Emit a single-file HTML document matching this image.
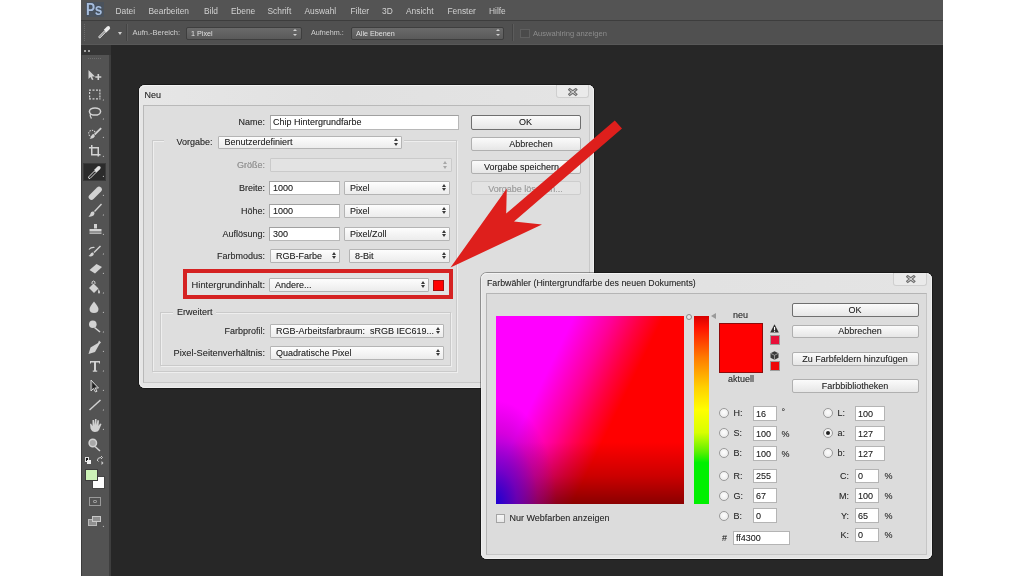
<!DOCTYPE html>
<html><head><meta charset="utf-8">
<style>
*{box-sizing:border-box}
html,body{margin:0;padding:0}
body{width:1024px;height:576px;position:relative;overflow:hidden;background:#fff;font-family:"Liberation Sans",sans-serif}
.a{position:absolute}
.t{position:absolute;white-space:nowrap;line-height:1;text-shadow:0 0 0.5px rgba(0,0,0,0.35)}
.menu{color:#d2d2d2;font-size:8.4px;top:6.6px;text-shadow:none}
.lbl{color:#2f2f2f;font-size:9px}
.fld{position:absolute;background:#fff;border:1px solid #b8b8b8;border-top-color:#a0a0a0;border-left-color:#a8a8a8}
.dd{position:absolute;background:linear-gradient(#fdfdfd,#ececec);border:1px solid #b4b4b4;border-radius:1px}
.btn{position:absolute;background:linear-gradient(#fbfbfb,#e6e6e6);border:1px solid #b0b0b0;border-radius:2px}
.ftxt{position:absolute;color:#2a2a2a;font-size:9px;line-height:1;white-space:nowrap}
.arr{position:absolute;width:4px;height:8px}
.arr:before{content:"";position:absolute;left:0;top:0;border-left:2px solid transparent;border-right:2px solid transparent;border-bottom:3px solid #3a3a3a}
.arr:after{content:"";position:absolute;left:0;top:4.5px;border-left:2px solid transparent;border-right:2px solid transparent;border-top:3px solid #3a3a3a}
.radio{position:absolute;width:10px;height:10px;border-radius:50%;border:1px solid #9a9a9a;background:radial-gradient(circle at 50% 40%,#fdfdfd,#e6e6e6)}
</style></head><body><div style="position:absolute;left:0;top:0;width:1024px;height:576px;will-change:transform">
<!-- PS window -->
<div class="a" style="left:81px;top:0;width:862px;height:576px;background:#272727"></div>
<!-- menubar -->
<div class="a" style="left:81px;top:0;width:862px;height:20px;background:#545454"></div>
<div class="a" style="left:81px;top:20px;width:862px;height:1px;background:#3d3d3d"></div>
<!-- options bar -->
<div class="a" style="left:81px;top:21px;width:862px;height:24px;background:#505050"></div>
<div class="a" style="left:81px;top:44px;width:862px;height:1px;background:#585858"></div>
<!-- toolbar -->
<div class="a" style="left:81px;top:45px;width:30px;height:531px;background:#535353"></div>
<div class="a" style="left:81px;top:45px;width:1px;height:531px;background:#3c3c3c"></div>
<div class="a" style="left:108.5px;top:45px;width:2.5px;height:531px;background:#3e3e3e"></div>
<div class="a" style="left:81px;top:45px;width:30px;height:10px;background:#353535"></div>
<div class="a" style="left:84px;top:49.5px;width:2px;height:2px;background:#a4a4a4"></div>
<div class="a" style="left:87.5px;top:49.5px;width:2px;height:2px;background:#a4a4a4"></div>
<div class="a" style="left:88px;top:58px;width:13px;height:1px;border-top:1px dotted #6e6e6e"></div>
<svg class="a" style="left:81px;top:44px" width="30" height="532" viewBox="81 44 30 532">
<g fill="#d2d2d2" stroke="none">
 <!-- move -->
 <path d="M88.5 70 L88.5 79 L90.5 77 L92 80 L93.5 79.5 L92 76.5 L95 76.5 Z"/>
 <path d="M97.5 74 h1.6 v2.2 h2.2 v1.6 h-2.2 v2.2 h-1.6 v-2.2 h-2.2 v-1.6 h2.2 Z"/>
 <!-- marquee dashed -->
 <path d="M89 89.5 h2 v1.2 h-2 Z M92.5 89.5 h2 v1.2 h-2 Z M96 89.5 h2 v1.2 h-2 Z M99 89.5 h1.5 v2 h-1.2 Z M89 92 h1.2 v2 h-1.2 Z M99.3 92.5 h1.2 v2 h-1.2 Z M89 95.5 h1.2 v2 h-1.2 Z M99.3 95.5 h1.2 v2 h-1.2 Z M89 98.3 h2 v1.2 h-2 Z M92.5 98.3 h2 v1.2 h-2 Z M96 98.3 h2 v1.2 h-2 Z M99.3 98.3 h1.2 v1.2 h-1.2 Z"/>
 <!-- lasso -->
 <ellipse cx="95" cy="111.5" rx="5.6" ry="3.6" fill="none" stroke="#d2d2d2" stroke-width="1.5"/>
 <path d="M90.5 113.5 Q89.5 116 91.5 118.5" fill="none" stroke="#d2d2d2" stroke-width="1.3"/>
 <!-- quick selection -->
 <circle cx="92" cy="133.5" r="3.3" fill="none" stroke="#d2d2d2" stroke-width="1.1" stroke-dasharray="1.4 1.1"/>
 <path d="M100.5 127.5 L101.8 128.8 L95.5 135 L94.2 133.7 Z"/>
 <path d="M94 134 Q95.5 135.5 94 137.5 Q92.5 139 89.5 138.5 Q91 137.5 91.3 136 Q91.8 134 94 134 Z"/>
 <!-- crop -->
 <path d="M91 145 h1.5 v9 h8 v1.5 h-9.5 Z M89 147 h10 v9.5 h-1.5 v-8 h-8.5 Z"/>
 <!-- eyedropper active bg handled separately -->
 <!-- healing -->
 <path d="M89.5 195 L97 187.5 Q99 185.5 101 187.5 Q103 189.5 101 191.5 L93.5 199 Q91.5 201 89.5 199 Q87.5 197 89.5 195 Z"/>
 <!-- brush -->
 <path d="M101 203.5 L102 204.5 L95 212 L94 211 Z"/>
 <path d="M93.5 211.5 Q95.5 213 93.5 215.5 Q91.5 217 88.5 216.5 Q90.5 215 90.5 213.5 Q91 211 93.5 211.5 Z"/>
 <!-- stamp -->
 <path d="M94 224 h3 v4.5 h-3 Z M89.5 229 h12 v2.5 h-12 Z M89.5 232.5 h12 v1.2 h-12 Z"/>
 <!-- history brush -->
 <path d="M100 245.5 L101 246.5 L94.5 253 L93.5 252 Z"/>
 <path d="M93 252.5 Q94.5 254 93 255.5 Q91 257 88.5 256 Q90 255 90.5 254 Q91 252 93 252.5 Z"/>
 <path d="M89 249.5 Q91 247 94.5 247.5" fill="none" stroke="#d2d2d2" stroke-width="1.1"/>
 <!-- eraser -->
 <path d="M89.5 270 L96.5 264 L102 267 L95 273.5 Z"/>
 <!-- bucket -->
 <path d="M89 288 L93.5 283.5 L98.5 288.5 L94 293 Z"/>
 <path d="M92 284 Q91.5 281 93.5 281 Q95.5 281 95 284" fill="none" stroke="#d2d2d2" stroke-width="1"/>
 <path d="M98.5 289 Q100 291 100 292 Q100 293.5 99 293.5 Q98 293.5 98 292 Z"/>
 <!-- blur drop -->
 <path d="M94 301.5 Q98.5 307 98.5 309 Q98.5 313 94 313 Q89.5 313 89.5 309 Q89.5 307 94 301.5 Z"/>
 <!-- dodge -->
 <circle cx="92.8" cy="324.3" r="3.8"/>
 <path d="M95 327 L100.5 331.5 L99.5 332.5 L94 328 Z"/>
 <!-- pen -->
 <path d="M99 340.5 L101 342.5 L99.5 344 L95 352 L88.5 354 L90.5 347.5 L98 343 Z"/>
 <!-- type -->
 <path d="M90 361 h10 v2.5 h-1 v-1 h-3 v8 h1.2 v1.2 h-4.4 v-1.2 h1.2 v-8 h-3 v1 h-1 Z"/>
 <!-- path selection -->
 <path d="M91 380 L91 391 L93.5 388.5 L95.5 392 L97 391.3 L95.3 388 L98.5 388 Z" fill="none" stroke="#d2d2d2" stroke-width="1"/>
 <path d="M92.5 383 L92.5 388.5 L96 386.5 Z" fill="#1e1e1e"/>
 <!-- line -->
 <path d="M89 409.5 L100 399.5 L101 400.5 L90 410.5 Z"/>
 <!-- hand -->
 <path d="M90 424 L91 423.5 L92.5 426 L92.5 420 L94 420 L94.5 425 L95 419 L96.5 419 L96.5 425 L97.5 420 L99 420.5 L98.5 426 L100 423.5 L101.5 424 L99 430 Q98 432 95 432 Q92 432 90.5 428.5 Z"/>
 <!-- zoom -->
 <circle cx="92.8" cy="443" r="3.7" fill="#a8a8a8" stroke="#d2d2d2" stroke-width="1.5"/>
 <path d="M95.5 446 L100.5 450.5 L99.5 451.5 L94.5 447 Z"/>
 <!-- small triangles -->
 <path d="M102.5 100.5 l1.5 -1.5 v1.5 Z M102.5 119.5 l1.5 -1.5 v1.5 Z M102.5 138 l1.5 -1.5 v1.5 Z M102.5 157 l1.5 -1.5 v1.5 Z M102.5 176.5 l1.5 -1.5 v1.5 Z M102.5 196 l1.5 -1.5 v1.5 Z M102.5 215.5 l1.5 -1.5 v1.5 Z M102.5 235 l1.5 -1.5 v1.5 Z M102.5 254.5 l1.5 -1.5 v1.5 Z M102.5 274 l1.5 -1.5 v1.5 Z M102.5 293.5 l1.5 -1.5 v1.5 Z M102.5 313 l1.5 -1.5 v1.5 Z M102.5 332.5 l1.5 -1.5 v1.5 Z M102.5 352 l1.5 -1.5 v1.5 Z M102.5 371.5 l1.5 -1.5 v1.5 Z M102.5 391 l1.5 -1.5 v1.5 Z M102.5 410.5 l1.5 -1.5 v1.5 Z M102.5 430 l1.5 -1.5 v1.5 Z M102.5 527 l1.5 -1.5 v1.5 Z" fill="#bdbdbd"/>
</g>
</svg>
<!-- active eyedropper -->
<div class="a" style="left:83px;top:162.5px;width:23px;height:18px;background:#2b2b2b;border:1px solid #3a3a3a"></div>
<svg class="a" style="left:83px;top:162.5px" width="23" height="18" viewBox="0 0 23 18"><path d="M6 15.5 L5.5 14 L11.5 8 L13 9.5 L7 15.5 Z" fill="none" stroke="#d8d8d8" stroke-width="1"/><path d="M11 7 L14.5 3.5 Q16 2.3 17.2 3.5 Q18.4 4.7 17 6.2 L13.5 9.5 Z" fill="#e2e2e2"/><path d="M19.5 14 l1.5 -1.5 v1.5 Z" fill="#bdbdbd"/></svg>
<!-- colors -->
<div class="a" style="left:84.5px;top:457px;width:4.5px;height:4.5px;background:#111;border:0.5px solid #ddd"></div>
<div class="a" style="left:86.5px;top:459.5px;width:4.5px;height:4.5px;background:#eee"></div>
<svg class="a" style="left:96px;top:456px" width="9" height="9" viewBox="0 0 9 9"><path d="M1.5 4 Q1.5 1.5 5 1.5 M5 0 L6.5 1.5 L5 3 M1 4 L2.5 5.5" fill="none" stroke="#d0d0d0" stroke-width="1"/><path d="M5.5 5 L7.5 7 L5.5 9 Z M4 5.5" fill="#d0d0d0"/></svg>
<div class="a" style="left:91.5px;top:476px;width:13.5px;height:13px;background:#fdfdfd;border:1px solid #444"></div>
<div class="a" style="left:84.5px;top:468.5px;width:13.5px;height:12.5px;background:#ccf2b7;border:1px solid #3c3c3c"></div>
<div class="a" style="left:88.5px;top:496.5px;width:12.5px;height:9.5px;border:1px solid #9a9a9a"></div>
<div class="a" style="left:92.5px;top:499.5px;width:4.5px;height:3.5px;border:1px solid #9a9a9a;border-radius:1px"></div>
<div class="a" style="left:88px;top:519px;width:9px;height:6.5px;background:#8f8f8f;border:1px solid #b9b9b9"></div>
<div class="a" style="left:92px;top:515.5px;width:9px;height:6.5px;background:#8f8f8f;border:1px solid #c8c8c8"></div>
<!-- Ps logo -->
<div class="a" style="left:85.5px;top:2px;width:18px;height:14.5px;background:#4a525c"></div><div class="t" style="left:86px;top:2px;font-size:16px;font-weight:bold;color:#a8bddb;letter-spacing:-0.5px;transform:scaleX(0.85);transform-origin:0 0;text-shadow:0 0 1px #2d4a70">Ps</div>
<div class="t menu" style="left:115.5px">Datei</div>
<div class="t menu" style="left:148.5px">Bearbeiten</div>
<div class="t menu" style="left:204px">Bild</div>
<div class="t menu" style="left:231px">Ebene</div>
<div class="t menu" style="left:267.5px">Schrift</div>
<div class="t menu" style="left:304.5px">Auswahl</div>
<div class="t menu" style="left:350.5px">Filter</div>
<div class="t menu" style="left:382px">3D</div>
<div class="t menu" style="left:406px">Ansicht</div>
<div class="t menu" style="left:447.5px">Fenster</div>
<div class="t menu" style="left:489px">Hilfe</div>
<!-- options bar contents -->
<div class="a" style="left:84px;top:24px;width:1px;height:17px;border-left:1px dotted #6a6a6a"></div>
<svg class="a" style="left:96px;top:24px" width="16" height="16" viewBox="0 0 16 16"><path d="M3 13.8 L2.8 12.6 L8.5 6.8 L9.8 8.1 L4.1 13.9 Z" fill="#9a9a9a" stroke="#d8d8d8" stroke-width="0.9"/><path d="M7.8 5.8 L10.8 2.8 Q12.5 1.5 13.7 2.7 Q14.8 4 13.4 5.6 L10.3 8.4 Z" fill="#ececec"/></svg>
<div class="a" style="left:118px;top:32px;border-left:2.5px solid transparent;border-right:2.5px solid transparent;border-top:3px solid #cfcfcf"></div>
<div class="a" style="left:126px;top:24px;width:1px;height:17px;background:#444"></div>
<div class="a" style="left:127px;top:24px;width:1px;height:17px;background:#5c5c5c"></div>
<div class="t" style="left:132.5px;top:29px;font-size:7.5px;color:#d0d0d0;text-shadow:none">Aufn.-Bereich:</div>
<div class="a" style="left:185.5px;top:26.5px;width:116px;height:13px;background:linear-gradient(#6a6a6a,#5a5a5a);border:1px solid #3e3e3e;border-radius:2px"></div>
<div class="t" style="left:191px;top:29.5px;font-size:7.2px;color:#e0e0e0;text-shadow:none">1 Pixel</div>
<div class="a" style="left:293px;top:29px;border-left:2px solid transparent;border-right:2px solid transparent;border-bottom:2.5px solid #d0d0d0"></div>
<div class="a" style="left:293px;top:34px;border-left:2px solid transparent;border-right:2px solid transparent;border-top:2.5px solid #d0d0d0"></div>
<div class="t" style="left:311px;top:29px;font-size:7.2px;color:#d0d0d0;text-shadow:none">Aufnehm.:</div>
<div class="a" style="left:350.5px;top:26.5px;width:153px;height:13px;background:linear-gradient(#6a6a6a,#5a5a5a);border:1px solid #3e3e3e;border-radius:2px"></div>
<div class="t" style="left:356px;top:29.5px;font-size:7.2px;color:#e0e0e0;text-shadow:none">Alle Ebenen</div>
<div class="a" style="left:496px;top:29px;border-left:2px solid transparent;border-right:2px solid transparent;border-bottom:2.5px solid #d0d0d0"></div>
<div class="a" style="left:496px;top:34px;border-left:2px solid transparent;border-right:2px solid transparent;border-top:2.5px solid #d0d0d0"></div>
<div class="a" style="left:512px;top:24px;width:1px;height:17px;background:#444"></div>
<div class="a" style="left:513px;top:24px;width:1px;height:17px;background:#5c5c5c"></div>
<div class="a" style="left:520px;top:28.5px;width:9.5px;height:9.5px;background:#4a4a4a;border:1px solid #5f5f5f"></div>
<div class="t" style="left:533px;top:29.5px;font-size:7.55px;color:#8c8c8c;text-shadow:none">Auswahlring anzeigen</div>

<!-- ===== NEU dialog ===== -->
<div class="a" style="left:138px;top:84px;width:457px;height:305px;border-radius:7px;background:rgba(0,0,0,0.35)"></div>
<div class="a" style="left:139px;top:85px;width:455px;height:303px;border-radius:6px;background:linear-gradient(90deg,#e6e6e6,#e1e1e1 45%,#e4e4e4);box-shadow:inset 0 1px 0 #f3f3f3,inset 1px 0 0 #efefef,inset -1px 0 0 #efefef,inset 0 -1px 0 #efefef"></div>
<div class="t" style="left:144.5px;top:91px;font-size:9px;color:#2e2e2e">Neu</div>
<div class="a" style="left:555.5px;top:85px;width:33px;height:13px;border:1px solid #cfcfcf;border-top:none;border-radius:0 0 3px 3px;background:#eaeaea"></div>
<svg class="a" style="left:567.5px;top:87.5px" width="10" height="9" viewBox="0 0 10 9"><path d="M0.5 1.7 L1.7 0.5 L4.75 2.8 L7.8 0.5 L9 1.7 L6.2 4 L9 6.3 L7.8 7.5 L4.75 5.2 L1.7 7.5 L0.5 6.3 L3.3 4 Z" fill="#f0f0f0" stroke="#6e6e6e" stroke-width="1.1"/></svg>
<div class="a" style="left:143px;top:105px;width:447px;height:278px;background:#dedede;border:1px solid #b9b9b9;border-right-color:#c8c8c8;border-bottom-color:#c8c8c8"></div>
<!-- outer group box (Vorgabe) -->
<div class="a" style="left:151.5px;top:140px;width:305px;height:232px;border:1px solid #cacaca;box-shadow:inset 1px 1px 0 #eeeeee,1px 1px 0 #eeeeee"></div>
<div class="a" style="left:164px;top:133px;width:240px;height:14px;background:#dedede"></div>
<!-- Erweitert group box -->
<div class="a" style="left:160px;top:311.5px;width:291px;height:54px;border:1px solid #cacaca;box-shadow:inset 1px 1px 0 #eeeeee,1px 1px 0 #eeeeee"></div>
<div class="a" style="left:173px;top:305px;width:43px;height:12px;background:#dedede"></div>

<div class="t lbl" style="right:759px;top:118px">Name:</div>
<div class="fld" style="left:269.5px;top:114.5px;width:189px;height:15px"></div>
<div class="t ftxt" style="left:273px;top:118px">Chip Hintergrundfarbe</div>

<div class="t lbl" style="left:176.5px;top:138px">Vorgabe:</div>
<div class="dd" style="left:217.5px;top:135.5px;width:184px;height:13px"></div>
<div class="t ftxt" style="left:224.5px;top:138px">Benutzerdefiniert</div>
<div class="arr" style="left:394px;top:138px"></div>

<div class="t lbl" style="right:759px;top:161px;color:#9a9a9a">Größe:</div>
<div class="dd" style="left:269.5px;top:158px;width:182px;height:14px;background:#e3e3e3;border-color:#cacaca"></div>
<div class="arr" style="left:443px;top:161px;opacity:.35"></div>

<div class="t lbl" style="right:759px;top:184px">Breite:</div>
<div class="fld" style="left:269px;top:180.5px;width:71px;height:14.5px"></div>
<div class="t ftxt" style="left:273px;top:184px">1000</div>
<div class="dd" style="left:344px;top:180.5px;width:106px;height:14.5px"></div>
<div class="t ftxt" style="left:350px;top:184px">Pixel</div>
<div class="arr" style="left:442px;top:183.5px"></div>

<div class="t lbl" style="right:759px;top:206.5px">Höhe:</div>
<div class="fld" style="left:269px;top:203.5px;width:71px;height:14.5px"></div>
<div class="t ftxt" style="left:273px;top:207px">1000</div>
<div class="dd" style="left:344px;top:203.5px;width:106px;height:14.5px"></div>
<div class="t ftxt" style="left:350px;top:207px">Pixel</div>
<div class="arr" style="left:442px;top:206.5px"></div>

<div class="t lbl" style="right:759px;top:229.5px">Auflösung:</div>
<div class="fld" style="left:269px;top:226.5px;width:71px;height:14.5px"></div>
<div class="t ftxt" style="left:273px;top:230px">300</div>
<div class="dd" style="left:344px;top:226.5px;width:106px;height:14.5px"></div>
<div class="t ftxt" style="left:350px;top:230px">Pixel/Zoll</div>
<div class="arr" style="left:442px;top:229.5px"></div>

<div class="t lbl" style="right:759px;top:252px">Farbmodus:</div>
<div class="dd" style="left:269.5px;top:248.5px;width:70.5px;height:14.5px"></div>
<div class="t ftxt" style="left:276px;top:252px">RGB-Farbe</div>
<div class="arr" style="left:332px;top:251.5px"></div>
<div class="dd" style="left:348.5px;top:248.5px;width:101.5px;height:14.5px"></div>
<div class="t ftxt" style="left:355px;top:252px">8-Bit</div>
<div class="arr" style="left:442px;top:251.5px"></div>

<!-- red highlight box -->
<div class="a" style="left:182.5px;top:269px;width:270.5px;height:30px;border:4.8px solid #d52222;background:#e2e2e2"></div>
<div class="t lbl" style="right:759px;top:281px;font-size:9.3px">Hintergrundinhalt:</div>
<div class="dd" style="left:268.5px;top:278px;width:160px;height:13.5px"></div>
<div class="t ftxt" style="left:275px;top:281px">Andere...</div>
<div class="arr" style="left:421px;top:280.5px"></div>
<div class="a" style="left:432.5px;top:279.5px;width:11.5px;height:11px;background:#ff0000;border:1px solid #a01010"></div>

<div class="t lbl" style="left:177px;top:308px">Erweitert</div>
<div class="t lbl" style="right:759px;top:327px">Farbprofil:</div>
<div class="dd" style="left:270px;top:323.5px;width:174px;height:14px"></div>
<div class="t ftxt" style="left:276px;top:327px">RGB-Arbeitsfarbraum:&nbsp; sRGB IEC619...</div>
<div class="arr" style="left:436px;top:326.5px"></div>
<div class="t lbl" style="right:759px;top:349px;font-size:9.25px">Pixel-Seitenverhältnis:</div>
<div class="dd" style="left:270px;top:345.5px;width:174px;height:14px"></div>
<div class="t ftxt" style="left:276px;top:349px">Quadratische Pixel</div>
<div class="arr" style="left:436px;top:348.5px"></div>

<!-- buttons -->
<div class="btn" style="left:470.5px;top:114.5px;width:110px;height:15px;border-color:#6f6f6f"></div>
<div class="t ftxt" style="left:470.5px;width:110px;text-align:center;top:118px">OK</div>
<div class="btn" style="left:470.5px;top:137px;width:110px;height:14px"></div>
<div class="t ftxt" style="left:476px;width:110px;text-align:center;top:140px">Abbrechen</div>
<div class="btn" style="left:470.5px;top:159.5px;width:110px;height:14px"></div>
<div class="t ftxt" style="left:466.5px;width:110px;text-align:center;top:162.5px">Vorgabe speichern</div>
<div class="btn" style="left:470.5px;top:181px;width:110px;height:14px;background:#e3e3e3;border-color:#cdcdcd"></div>
<div class="t ftxt" style="left:470.5px;width:110px;text-align:center;top:184.5px;color:#a8a8a8">Vorgabe löschen...</div>


<!-- ===== red arrow ===== -->
<svg class="a" style="left:0;top:0" width="1024" height="576" viewBox="0 0 1024 576">
<path d="M450.5 267.5 L506.8 188.5 L506.2 213.5 L614.8 120.4 L622 128.5 L514 221.5 L542 224.5 Z" fill="#de1f1c"/>
</svg>
<!-- ===== Farbwaehler dialog ===== -->
<div class="a" style="left:480px;top:271.5px;width:453px;height:288.5px;border-radius:7px;background:rgba(0,0,0,0.35)"></div>
<div class="a" style="left:481px;top:272.5px;width:451px;height:286.5px;border-radius:6px;background:linear-gradient(90deg,#e6e6e6,#e2e2e2 50%,#e4e4e4);box-shadow:inset 0 1px 0 #f3f3f3,inset 1px 0 0 #efefef,inset -1px 0 0 #efefef,inset 0 -1px 0 #efefef"></div>
<div class="t" style="left:487px;top:278.5px;font-size:8.8px;color:#2e2e2e">Farbwähler (Hintergrundfarbe des neuen Dokuments)</div>
<div class="a" style="left:892.5px;top:272.5px;width:34.5px;height:13px;border:1px solid #cfcfcf;border-top:none;border-radius:0 0 3px 3px;background:#eaeaea"></div>
<svg class="a" style="left:905.5px;top:275px" width="10" height="9" viewBox="0 0 10 9"><path d="M0.5 1.7 L1.7 0.5 L4.75 2.8 L7.8 0.5 L9 1.7 L6.2 4 L9 6.3 L7.8 7.5 L4.75 5.2 L1.7 7.5 L0.5 6.3 L3.3 4 Z" fill="#f0f0f0" stroke="#6e6e6e" stroke-width="1.1"/></svg>
<div class="a" style="left:486px;top:293px;width:441px;height:262px;background:#dcdcdc;border:1px solid #b5b5b5;border-right-color:#c6c6c6;border-bottom-color:#c6c6c6"></div>

<!-- color field -->
<div class="a" style="left:495.5px;top:316px;width:188.5px;height:188px;overflow:hidden;background:#f00">
 <div class="a" style="left:0;top:0;width:100%;height:100%;background:linear-gradient(116deg,#ff00ff 0%,#ff00ff 28%,#ff0098 42%,#ff0040 52%,#ff0000 60%)"></div>
 <div class="a" style="left:0;top:0;width:100%;height:100%;background:linear-gradient(180deg,rgba(0,0,0,0) 0%,rgba(0,0,0,0) 67%,rgba(0,0,0,0.2) 85%,rgba(0,0,0,0.46) 100%)"></div>
 <div class="a" style="left:0;top:0;width:100%;height:100%;background:radial-gradient(ellipse 32% 55% at 0% 100%,rgba(30,0,210,1) 0%,rgba(90,0,200,0.75) 35%,rgba(140,0,160,0.35) 70%,rgba(140,0,140,0) 100%)"></div>
</div>
<div class="a" style="left:694px;top:316px;width:15px;height:188px;background:linear-gradient(#d80000 0%,#ff1000 6%,#ff7a00 22%,#ffd000 38%,#ffff00 50%,#d8ff00 62%,#60f000 72%,#00f000 78%,#00f000 100%)"></div>
<div class="a" style="left:686px;top:313.5px;width:6px;height:6px;border-radius:50%;border:1px solid #8a8a8a;background:#e6e6e6"></div>
<div class="a" style="left:711px;top:313px;border-top:3.5px solid transparent;border-bottom:3.5px solid transparent;border-right:5px solid #9a9a9a"></div>

<div class="t" style="left:733px;top:310.5px;font-size:9px;color:#333">neu</div>
<div class="a" style="left:718.5px;top:322.5px;width:44.5px;height:50px;background:#ff0000;border:1px solid #8c0b0b"></div>
<div class="t" style="left:728px;top:375px;font-size:9px;color:#333">aktuell</div>
<svg class="a" style="left:769.5px;top:323.5px" width="9" height="9" viewBox="0 0 9 9"><path d="M4.5 0.3 L8.8 8.6 L0.2 8.6 Z" fill="#303030"/><rect x="4" y="3" width="1.1" height="3" fill="#fff"/><rect x="4" y="6.7" width="1.1" height="1.1" fill="#fff"/></svg>
<div class="a" style="left:769.5px;top:334.5px;width:10px;height:10px;background:#e8103a;border:1px solid #9c9c9c"></div>
<svg class="a" style="left:769.5px;top:350.5px" width="9" height="9" viewBox="0 0 9 9"><path d="M4.5 0.3 L8.5 2.3 L8.5 6.7 L4.5 8.7 L0.5 6.7 L0.5 2.3 Z" fill="#3a3a3a"/><path d="M0.8 2.4 L4.5 4.3 L8.2 2.4 M4.5 4.3 L4.5 8.5" stroke="#bbb" stroke-width="0.7" fill="none"/></svg>
<div class="a" style="left:769.5px;top:361px;width:10px;height:10px;background:#ee0a0a;border:1px solid #9c9c9c"></div>

<div class="btn" style="left:791.5px;top:302.5px;width:127px;height:14px;border-color:#6f6f6f"></div>
<div class="t ftxt" style="left:791.5px;width:127px;text-align:center;top:305.5px">OK</div>
<div class="btn" style="left:791.5px;top:324.5px;width:127px;height:13.5px"></div>
<div class="t ftxt" style="left:796.5px;width:127px;text-align:center;top:327px">Abbrechen</div>
<div class="btn" style="left:791.5px;top:351.5px;width:127px;height:14px"></div>
<div class="t ftxt" style="left:791.5px;width:127px;text-align:center;top:354.5px">Zu Farbfeldern hinzufügen</div>
<div class="btn" style="left:791.5px;top:379px;width:127px;height:13.5px"></div>
<div class="t ftxt" style="left:791.5px;width:127px;text-align:center;top:381.5px">Farbbibliotheken</div>

<!-- HSB / RGB -->
<div class="radio" style="left:719px;top:408px"></div><div class="t lbl" style="left:733.5px;top:409px">H:</div>
<div class="fld" style="left:752.5px;top:406px;width:24px;height:14.5px;border-color:#b4b4b4"></div><div class="t ftxt" style="left:756px;top:409.5px">16</div><div class="t lbl" style="left:781.5px;top:408px">°</div>
<div class="radio" style="left:719px;top:428px"></div><div class="t lbl" style="left:733.5px;top:429px">S:</div>
<div class="fld" style="left:752.5px;top:426px;width:24px;height:14.5px;border-color:#b4b4b4"></div><div class="t ftxt" style="left:756px;top:429.5px">100</div><div class="t lbl" style="left:781.5px;top:429.5px">%</div>
<div class="radio" style="left:719px;top:448px"></div><div class="t lbl" style="left:733.5px;top:449px">B:</div>
<div class="fld" style="left:752.5px;top:446px;width:24px;height:14.5px;border-color:#b4b4b4"></div><div class="t ftxt" style="left:756px;top:449.5px">100</div><div class="t lbl" style="left:781.5px;top:449.5px">%</div>

<div class="radio" style="left:719px;top:471px"></div><div class="t lbl" style="left:733.5px;top:472px">R:</div>
<div class="fld" style="left:752.5px;top:468.5px;width:24px;height:14.5px;border-color:#b4b4b4"></div><div class="t ftxt" style="left:756px;top:472px">255</div>
<div class="radio" style="left:719px;top:490.5px"></div><div class="t lbl" style="left:733.5px;top:491.5px">G:</div>
<div class="fld" style="left:752.5px;top:488px;width:24px;height:14.5px;border-color:#b4b4b4"></div><div class="t ftxt" style="left:756px;top:491.5px">67</div>
<div class="radio" style="left:719px;top:510.5px"></div><div class="t lbl" style="left:733.5px;top:511.5px">B:</div>
<div class="fld" style="left:752.5px;top:508px;width:24px;height:14.5px;border-color:#b4b4b4"></div><div class="t ftxt" style="left:756px;top:511.5px">0</div>
<div class="t lbl" style="left:722px;top:534px">#</div>
<div class="fld" style="left:732.5px;top:530.5px;width:57px;height:14.5px;border-color:#b4b4b4"></div><div class="t ftxt" style="left:736px;top:534px">ff4300</div>

<!-- Lab -->
<div class="radio" style="left:823px;top:408px"></div><div class="t lbl" style="left:837.5px;top:409px">L:</div>
<div class="fld" style="left:854.5px;top:406px;width:30px;height:14.5px;border-color:#b4b4b4"></div><div class="t ftxt" style="left:858px;top:409.5px">100</div>
<div class="radio" style="left:823px;top:428px"></div><div class="a" style="left:826px;top:431px;width:4px;height:4px;border-radius:50%;background:#222"></div><div class="t lbl" style="left:837.5px;top:429px">a:</div>
<div class="fld" style="left:854.5px;top:426px;width:30px;height:14.5px;border-color:#b4b4b4"></div><div class="t ftxt" style="left:858px;top:429.5px">127</div>
<div class="radio" style="left:823px;top:448px"></div><div class="t lbl" style="left:837.5px;top:449px">b:</div>
<div class="fld" style="left:854.5px;top:446px;width:30px;height:14.5px;border-color:#b4b4b4"></div><div class="t ftxt" style="left:858px;top:449.5px">127</div>
<!-- CMYK -->
<div class="t lbl" style="right:175px;top:472px">C:</div>
<div class="fld" style="left:854.5px;top:468.5px;width:24.5px;height:14.5px;border-color:#b4b4b4"></div><div class="t ftxt" style="left:858px;top:472px">0</div><div class="t lbl" style="left:884.5px;top:472px">%</div>
<div class="t lbl" style="right:175px;top:491.5px">M:</div>
<div class="fld" style="left:854.5px;top:488px;width:24.5px;height:14.5px;border-color:#b4b4b4"></div><div class="t ftxt" style="left:858px;top:491.5px">100</div><div class="t lbl" style="left:884.5px;top:491.5px">%</div>
<div class="t lbl" style="right:175px;top:511.5px">Y:</div>
<div class="fld" style="left:854.5px;top:508px;width:24.5px;height:14.5px;border-color:#b4b4b4"></div><div class="t ftxt" style="left:858px;top:511.5px">65</div><div class="t lbl" style="left:884.5px;top:511.5px">%</div>
<div class="t lbl" style="right:175px;top:531px">K:</div>
<div class="fld" style="left:854.5px;top:527.5px;width:24.5px;height:14.5px;border-color:#b4b4b4"></div><div class="t ftxt" style="left:858px;top:531px">0</div><div class="t lbl" style="left:884.5px;top:531px">%</div>

<div class="a" style="left:495.5px;top:513.5px;width:9.5px;height:9px;background:linear-gradient(#f6f6f6,#e8e8e8);border:1px solid #a4a4a4"></div>
<div class="t lbl" style="left:509.5px;top:514px">Nur Webfarben anzeigen</div>
</div></body></html>
